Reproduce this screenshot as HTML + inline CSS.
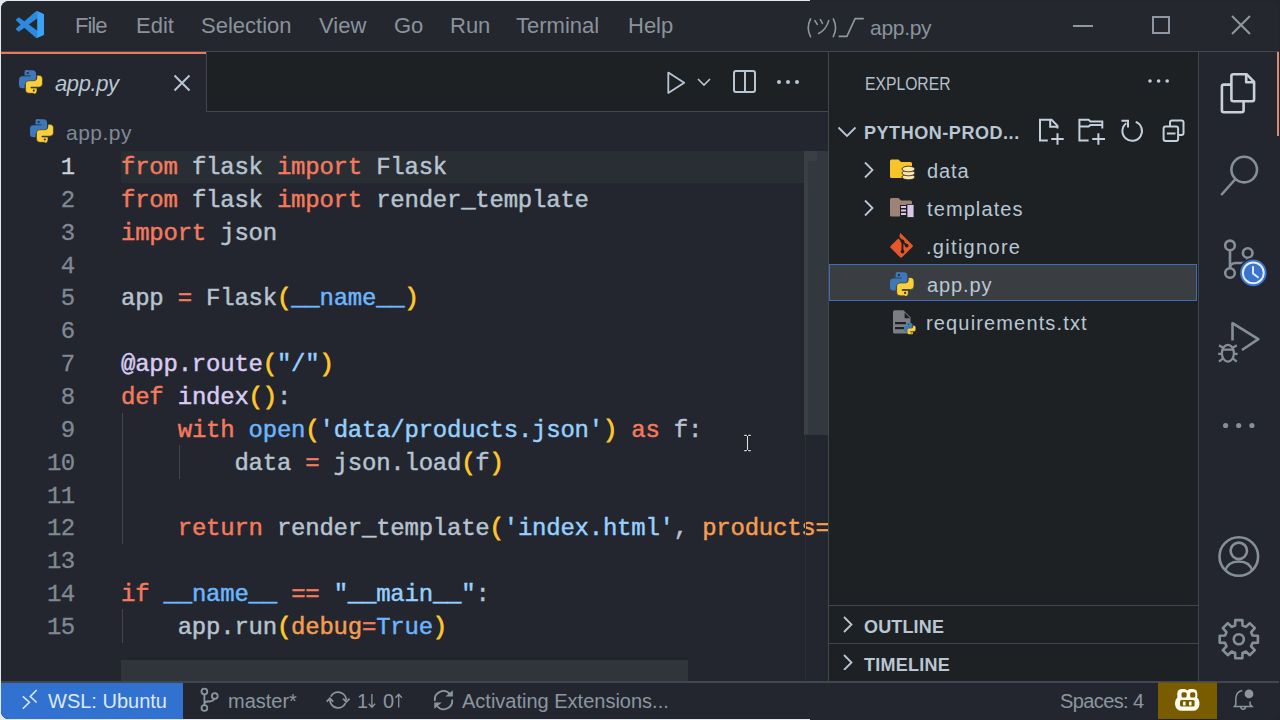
<!DOCTYPE html>
<html><head><meta charset="utf-8">
<style>
*{margin:0;padding:0;box-sizing:border-box}
html,body{width:1280px;height:720px;overflow:hidden;background:linear-gradient(90deg,#e3e8f0 0,#e3e8f0 810px,#22262c 810px,#22262c 100%)}
body{position:relative;font-family:"Liberation Sans",sans-serif}
.a{position:absolute}
#win{position:absolute;left:1px;top:1px;width:1278px;height:717.5px;background:#23262e;border-radius:8px;overflow:hidden}
.t{position:absolute;white-space:pre;line-height:1;transform-origin:0 0}
.menu{color:#8a939c;font-size:22px}
.code{-webkit-text-stroke:0.45px currentColor;font-family:"Liberation Mono",monospace;font-size:24px;letter-spacing:-0.23px;white-space:pre;position:absolute;left:120px;line-height:32.857px;color:#b6c3d0}
.ln{-webkit-text-stroke:0.3px currentColor;font-family:"Liberation Mono",monospace;font-size:24px;letter-spacing:-0.6px;position:absolute;width:73.6px;text-align:right;line-height:32.857px;color:#7f8993;left:0}
.k{color:#f47a5e}.s{color:#96d0ff}.b{color:#6cb6ff}.f{color:#d9cbf3}.o{color:#f69d50}.y{color:#ffc72e;-webkit-text-stroke:0.8px #ffc72e}
.side{color:#b9c6d3;font-size:20px;letter-spacing:0.9px}
.sb{color:#8b96a1;font-size:20px}
</style></head><body>
<div id="win">
  <!-- title bar -->
  <div class="a" style="left:0;top:0;width:1278px;height:50px;background:#24272e"></div>
  <div class="a" style="left:0;top:50px;width:1278px;height:1px;background:#42474f"></div>
  <!-- vscode logo -->
  <svg class="a" style="left:14.6px;top:10px" width="28.5" height="27" viewBox="0 0 100 100" preserveAspectRatio="none">
    <path d="M96.46 10.8L75.86.87a6.23 6.230 0 0 0-7.1 1.2L29.35 38.04 12.190 25.010a4.16 4.16 0 0 0-5.32.24l-5.5 5a4.17 4.17 0 0 0 0 6.16L16.25 50 1.37 63.58a4.17 4.17 0 0 0 0 6.16l5.5 5a4.16 4.16 0 0 0 5.32.24l17.16-13.03 39.41 35.97a6.22 6.22 0 0 0 7.1 1.2l20.6-9.92A6.25 6.25 0 0 0 100 83.58V16.42a6.26 6.26 0 0 0-3.54-5.62zM75.02 72.7L45.11 50l29.9-22.7v45.4z" fill="#2b8ae0"/>
    <path d="M75 0.5 L96.5 10.8 A6.26 6.26 0 0 1 100 16.42 V83.58 A6.25 6.25 0 0 1 96.46 89.2 L75 99.5 Z" fill="#3ba3f5"/>
  </svg>
  <div class="t menu" style="left:74px;top:14px;letter-spacing:-1px">File</div>
  <div class="t menu" style="left:135px;top:14px">Edit</div>
  <div class="t menu" style="left:200px;top:14px">Selection</div>
  <div class="t menu" style="left:318px;top:14px">View</div>
  <div class="t menu" style="left:393px;top:14px">Go</div>
  <div class="t menu" style="left:449px;top:14px">Run</div>
  <div class="t menu" style="left:515px;top:14px">Terminal</div>
  <div class="t menu" style="left:627px;top:14px">Help</div>
  <svg class="a" style="left:799px;top:11px" width="70" height="30" viewBox="800 12 70 30" fill="none" stroke="#8f98a2" stroke-width="1.6" stroke-linecap="round">
    <path d="M810.5 18.9 Q806 28 810.5 36.7"/>
    <path d="M814.9 20.6 L817.3 24.4 M820.4 19.5 L822.4 23.3 M828.7 20.6 Q826 30 818.6 33.4"/>
    <path d="M833.3 18.9 Q837.8 28 833.3 36.7"/>
    <path d="M838.6 36.4 H846.9 L855.1 18.6 H863.8" stroke-linecap="butt"/>
  </svg>
  <div class="t menu" style="left:869px;top:15.5px;font-size:21px;letter-spacing:-0.3px">app.py</div>
  <!-- window controls -->
  <div class="a" style="left:1072px;top:24px;width:20px;height:2px;background:#8f98a2"></div>
  <div class="a" style="left:1151px;top:15px;width:18px;height:18px;border:2px solid #8f98a2"></div>
  <svg class="a" style="left:1229px;top:13px" width="22" height="22" viewBox="0 0 22 22"><path d="M2 2 L20 20 M20 2 L2 20" stroke="#8f98a2" stroke-width="2"/></svg>

  <!-- tab bar -->
  <div class="a" style="left:0;top:51px;width:827px;height:60px;background:#1d2124"></div>
  <div class="a" style="left:0;top:110px;width:827px;height:1px;background:#42474f"></div>
  <div class="a" style="left:0;top:51px;width:206px;height:60px;background:#23262e;border-right:1px solid #42474f"></div>
  <div class="a" style="left:0;top:51px;width:205px;height:2px;background:#ec775c"></div>
  <div class="t" style="left:54px;top:72px;font-size:22px;font-style:italic;color:#b8c6d4;letter-spacing:-0.4px">app.py</div>
  <svg class="a" style="left:172px;top:73px" width="18" height="18" viewBox="0 0 18 18"><path d="M1.5 1.5 L16.5 16.5 M16.5 1.5 L1.5 16.5" stroke="#b8c6d4" stroke-width="2"/></svg>

  <!-- python symbol -->
  <svg width="0" height="0" style="position:absolute">
    <defs>
      <g id="py">
        <path d="M9.2 0.2 h4.6 a3.6 3.6 0 0 1 3.6 3.6 v5.8 a3.4 3.4 0 0 1 -3.4 3.4 h-5.2 a3 3 0 0 0 -3 3 v2.6 h-2.2 a3.6 3.6 0 0 1 -3.6 -3.6 v-4.9 a3.6 3.6 0 0 1 3.6 -3.6 h8.2 v-0.9 h-6.2 v-2.8 a3.6 3.6 0 0 1 3.6 -3.6 z" fill="#3d78bb"/>
        <circle cx="8.9" cy="3.1" r="1.1" fill="#1e2a3a"/>
        <path d="M14.8 23.8 h-4.6 a3.6 3.6 0 0 1 -3.6 -3.6 v-5.8 a3.4 3.4 0 0 1 3.4 -3.4 h5.2 a3 3 0 0 0 3 -3 v-2.6 h2.2 a3.6 3.6 0 0 1 3.6 3.6 v4.9 a3.6 3.6 0 0 1 -3.6 3.6 h-8.2 v0.9 h6.2 v2.8 a3.6 3.6 0 0 1 -3.6 3.6 z" fill="#f9cf3a" stroke="#23262e" stroke-width="0.6"/>
        <circle cx="15.1" cy="20.9" r="1.1" fill="#3a3420"/>
      </g>
    </defs>
  </svg>
  <svg class="a" style="left:18px;top:69px" width="23.5" height="23.5" viewBox="0 0 24 24"><use href="#py"/></svg>
  <svg class="a" style="left:29px;top:118px" width="23.5" height="23.5" viewBox="0 0 24 24"><use href="#py"/></svg>
  <!-- run, split, more -->
  <svg class="a" style="left:664px;top:68px" width="22" height="26" viewBox="0 0 22 26"><path d="M3.3 3.6 L19.2 13.7 L3.3 23.9 Z" fill="none" stroke="#b8c6d4" stroke-width="1.8" stroke-linejoin="round"/></svg>
  <svg class="a" style="left:695.5px;top:76px" width="14" height="10" viewBox="0 0 14 10"><path d="M1 2 L7 8 L13 2" fill="none" stroke="#b8c6d4" stroke-width="1.6"/></svg>
  <div class="a" style="left:732px;top:69px;width:22.6px;height:22.6px;border:2px solid #b8c6d4;border-radius:3px"></div>
  <div class="a" style="left:742.6px;top:69px;width:2px;height:22.6px;background:#b8c6d4"></div>
  <svg class="a" style="left:775px;top:78px" width="24" height="6" viewBox="0 0 24 6"><circle cx="3" cy="3" r="2" fill="#b8c6d4"/><circle cx="12" cy="3" r="2" fill="#b8c6d4"/><circle cx="21" cy="3" r="2" fill="#b8c6d4"/></svg>

  <!-- breadcrumb -->
  <div class="t" style="left:65px;top:121px;font-size:21px;letter-spacing:0.5px;color:#7f8a96">app.py</div>

  <!-- editor -->
  <div class="a" style="left:120px;top:150px;width:684px;height:32px;background:#292d34"></div>
  <div class="a" id="code" style="left:0;top:151px;width:805px;height:530px">
    <div class="ln" style="top:0;color:#c8d2dc">1</div>
    <div class="ln" style="top:32.857px">2</div>
    <div class="ln" style="top:65.714px">3</div>
    <div class="ln" style="top:98.571px">4</div>
    <div class="ln" style="top:131.43px">5</div>
    <div class="ln" style="top:164.29px">6</div>
    <div class="ln" style="top:197.14px">7</div>
    <div class="ln" style="top:230px">8</div>
    <div class="ln" style="top:262.86px">9</div>
    <div class="ln" style="top:295.71px">10</div>
    <div class="ln" style="top:328.57px">11</div>
    <div class="ln" style="top:361.43px">12</div>
    <div class="ln" style="top:394.29px">13</div>
    <div class="ln" style="top:427.14px">14</div>
    <div class="ln" style="top:460px">15</div>
    <div class="code" style="top:0"><span class="k">from</span> flask <span class="k">import</span> Flask</div>
    <div class="code" style="top:32.857px"><span class="k">from</span> flask <span class="k">import</span> render_template</div>
    <div class="code" style="top:65.714px"><span class="k">import</span> json</div>
    <div class="code" style="top:131.43px">app <span class="k">=</span> Flask<span class="y">(</span><span class="b">__name__</span><span class="y">)</span></div>
    <div class="code" style="top:197.14px"><span class="f">@app.route</span><span class="y">(</span><span class="s">"/"</span><span class="y">)</span></div>
    <div class="code" style="top:230px"><span class="k">def</span> <span class="f">index</span><span class="y">()</span>:</div>
    <div class="code" style="top:262.86px">    <span class="k">with</span> <span class="b">open</span><span class="y">(</span><span class="s">'data/products.json'</span><span class="y">)</span> <span class="k">as</span> f:</div>
    <div class="code" style="top:295.71px">        data <span class="k">=</span> json.load<span class="y">(</span>f<span class="y">)</span></div>
    <div class="code" style="top:361.43px">    <span class="k">return</span> render_template<span class="y">(</span><span class="s">'index.html'</span>, <span class="o">products=</span></div>
    <div class="code" style="top:427.14px"><span class="k">if</span> <span class="b">__name__</span> <span class="k">==</span> <span class="s">"__main__"</span>:</div>
    <div class="code" style="top:460px">    app.run<span class="y">(</span><span class="o">debug</span><span class="k">=</span><span class="b">True</span><span class="y">)</span></div>
  </div>
  <!-- indent guides -->
  <div class="a" style="left:121px;top:411.6px;width:1.3px;height:131px;background:#40454d"></div>
  <div class="a" style="left:177.5px;top:444px;width:1.3px;height:33.7px;background:#40454d"></div>
  <div class="a" style="left:121px;top:608.4px;width:1.3px;height:33.2px;background:#40454d"></div>
  <!-- scrollbars -->
  <div class="a" style="left:803px;top:149.5px;width:24px;height:284px;background:#33383e"></div>
  <div class="a" style="left:803px;top:149.5px;width:3.5px;height:284px;background:#3b3f45"></div>
  <div class="a" style="left:807px;top:149.5px;width:9px;height:10px;background:#3a3f46"></div>
  <div class="a" style="left:127px;top:656px;width:560px;height:3px;background:#202427"></div>
  <div class="a" style="left:120px;top:659px;width:567px;height:21.5px;background:#30353b"></div>
  <!-- sidebar -->
  <div class="a" style="left:827px;top:51px;width:1px;height:630px;background:#42474f"></div>
  <div class="a" style="left:828px;top:51px;width:369px;height:630px;background:#1d2124"></div>
  <div class="t side" style="left:863.5px;top:74px;font-size:18px;letter-spacing:0;transform:scaleX(0.872);color:#b4c0cc">EXPLORER</div>
  <svg class="a" style="left:1145.5px;top:77px" width="24" height="6" viewBox="0 0 24 6"><circle cx="3" cy="3" r="1.8" fill="#c0ccd8"/><circle cx="11.6" cy="3" r="1.8" fill="#c0ccd8"/><circle cx="20.2" cy="3" r="1.8" fill="#c0ccd8"/></svg>
  <svg class="a" style="left:836px;top:124px" width="20" height="14" viewBox="0 0 20 14"><path d="M1.5 2.5 L10 11 L18.5 2.5" fill="none" stroke="#b8c6d4" stroke-width="1.8"/></svg>
  <div class="t side" style="left:863px;top:123px;font-size:18px;font-weight:bold;letter-spacing:0.55px">PYTHON-PROD...</div>
  <!-- tree -->
  <div class="a" style="left:828px;top:263.3px;width:368px;height:37px;background:#3a3e43;border:1px solid #3d6fb8"></div>
  <div class="t side" style="left:926px;top:160px">data</div>
  <div class="t side" style="left:926px;top:198px;letter-spacing:1.1px">templates</div>
  <div class="t side" style="left:925px;top:236px;letter-spacing:1.3px">.gitignore</div>
  <div class="t side" style="left:926px;top:274px">app.py</div>
  <div class="t side" style="left:925px;top:312px;letter-spacing:1.15px">requirements.txt</div>

  <!-- sidebar toolbar icons -->
  <svg class="a" style="left:1029px;top:109px" width="160" height="40" viewBox="1030 110 160 40" fill="none" stroke="#c3cfdb" stroke-width="2">
    <path d="M1047.8 140.4 H1040 V119.8 H1051.6 L1057.5 125.8 V128.6"/>
    <path d="M1050.2 120 V126.8 H1057.5"/>
    <path d="M1051.2 139 H1063.7 M1057.5 133.2 V144.8"/>
    <path d="M1088.6 140.4 H1079.4 V119.8 H1088.6 L1090.4 121.4 H1102.3 V128.6"/>
    <path d="M1079.4 126.5 H1088.6 L1090.4 124.9 H1102.3"/>
    <path d="M1092.2 139 H1105 M1098.4 133.2 V144.8"/>
    <path d="M1135.7 121.9 A9.8 9.8 0 1 1 1126.3 123.2"/>
    <path d="M1121.4 120.8 H1128 V127.4"/>
    <path d="M1170 126.5 V122.5 a2 2 0 0 1 2 -2 h9.5 a2 2 0 0 1 2 2 v10.5 a2 2 0 0 1 -2 2 h-3.4"/>
    <rect x="1163.6" y="126.5" width="14.5" height="14.5" rx="2"/>
    <path d="M1166.9 133.6 H1175.5"/>
  </svg>
  <!-- tree chevrons -->
  <svg class="a" style="left:859px;top:159px" width="20" height="60" viewBox="860 160 20 60" fill="none" stroke="#b9c6d3" stroke-width="1.8">
    <path d="M865 162.5 L872.5 170 L865 177.5"/>
    <path d="M865 200.5 L872.5 208 L865 215.5"/>
  </svg>
  <svg class="a" style="left:837px;top:609px" width="20" height="60" viewBox="838 610 20 60" fill="none" stroke="#b9c6d3" stroke-width="1.8">
    <path d="M844 617 L851.5 624.5 L844 632"/>
    <path d="M844 655 L851.5 662.5 L844 670"/>
  </svg>
  <!-- tree file icons -->
  <svg class="a" style="left:887px;top:155px" width="30" height="30" viewBox="888 156 30 30">
    <path d="M890 161 a1.5 1.5 0 0 1 1.5 -1.5 h7 l2.5 2.5 h9.5 a1.5 1.5 0 0 1 1.5 1.5 v13 a1.5 1.5 0 0 1 -1.5 1.5 h-19 a1.5 1.5 0 0 1 -1.5 -1.5 z" fill="#f8c42a"/>
    <ellipse cx="908.5" cy="177" rx="6.5" ry="2.8" fill="#fbe6a6" stroke="#1d2124" stroke-width="0.8"/>
    <ellipse cx="908.5" cy="173" rx="6.5" ry="2.8" fill="#fbe6a6" stroke="#1d2124" stroke-width="0.8"/>
    <ellipse cx="908.5" cy="169" rx="6.5" ry="2.8" fill="#fbe6a6" stroke="#1d2124" stroke-width="0.8"/>
  </svg>
  <svg class="a" style="left:887px;top:193px" width="30" height="30" viewBox="888 194 30 30">
    <path d="M890 199.5 a1.5 1.5 0 0 1 1.5 -1.5 h7 l2.5 2.5 h9.5 a1.5 1.5 0 0 1 1.5 1.5 v13 a1.5 1.5 0 0 1 -1.5 1.5 h-19 a1.5 1.5 0 0 1 -1.5 -1.5 z" fill="#9d8275"/>
    <rect x="900" y="205" width="7" height="12" fill="#1d2124"/>
    <rect x="901" y="206" width="5" height="2" fill="#d9c6e6"/>
    <rect x="901" y="209.5" width="5" height="2" fill="#d9c6e6"/>
    <rect x="901" y="213" width="5" height="2" fill="#d9c6e6"/>
    <rect x="907" y="204.5" width="7" height="13" fill="#d9c6e6" stroke="#1d2124" stroke-width="0.8"/>
  </svg>
  <svg class="a" style="left:888px;top:232px" width="26" height="26" viewBox="0 0 28 28">
    <path d="M12 1.8 L25.2 15 Q26.2 16 25.2 17 L14 28.2 Q13 29.2 12 28.2 L1.8 18 Q0.8 17 1.8 16 L11 6.8 Z" fill="#e8572a" transform="translate(0,-2)"/>
    <path d="M10 4.5 L14.5 9 M14.5 9 V19.5 M14.5 9 L18.5 13" stroke="#1d2124" stroke-width="2" fill="none"/>
    <circle cx="14.5" cy="20" r="2" fill="#1d2124"/><circle cx="19" cy="13.5" r="2" fill="#1d2124"/><circle cx="14.5" cy="9" r="2" fill="#1d2124"/>
  </svg>
  <svg class="a" style="left:889px;top:271px" width="24" height="24" viewBox="0 0 24 24"><use href="#py"/></svg>
  <svg class="a" style="left:887px;top:307px" width="30" height="28" viewBox="888 308 30 28">
    <path d="M893 311.8 a1.5 1.5 0 0 1 1.5 -1.5 h9 l7 7 v14.8 a1.5 1.5 0 0 1 -1.5 1.5 h-14.5 a1.5 1.5 0 0 1 -1.5 -1.5 z" fill="#7b7e84"/>
    <path d="M904.6 312.6 V318.2 H910.2 Z" fill="#1d2124"/>
    <rect x="895" y="322" width="11" height="2.2" fill="#1d2124"/>
    <rect x="895" y="327" width="9" height="2.2" fill="#1d2124"/>
    <svg x="904" y="322.8" width="11.8" height="11.8" viewBox="0 0 24 24"><use href="#py"/></svg>
  </svg>
  <!-- sections -->
  <div class="a" style="left:828px;top:604px;width:369px;height:1px;background:#42474f"></div>
  <div class="a" style="left:828px;top:642px;width:369px;height:1px;background:#42474f"></div>
  <div class="t side" style="left:863px;top:617px;font-size:18px;font-weight:bold;letter-spacing:0.15px">OUTLINE</div>
  <div class="t side" style="left:863px;top:655px;font-size:18px;font-weight:bold;letter-spacing:0.25px">TIMELINE</div>
  <!-- activity bar -->
  <div class="a" style="left:1197px;top:51px;width:1px;height:630px;background:#42474f"></div>

  <!-- activity bar icons -->
  <svg class="a" style="left:1197px;top:50px" width="79" height="630" viewBox="1198 51 79 630" fill="none" stroke-linejoin="round">
    <g stroke="#c7d1dc" stroke-width="2.6">
      <path d="M1231.4 84.6 H1223.9 a2 2 0 0 0 -2 2 V110.2 a2 2 0 0 0 2 2 H1241.6 a2 2 0 0 0 2 -2 V101.2"/>
      <path d="M1233.4 74.2 H1246.5 L1254.1 81.8 V99.2 a2 2 0 0 1 -2 2 H1233.4 a2 2 0 0 1 -2 -2 V76.2 a2 2 0 0 1 2 -2 z"/>
      <path d="M1246.2 74.6 V82.2 H1253.8"/>
    </g>
    <g stroke="#858f99" stroke-width="2.6">
      <circle cx="1244.2" cy="169.6" r="12.8"/>
      <path d="M1235.5 179 L1221.2 195"/>
      <circle cx="1230" cy="245.4" r="4.8"/>
      <circle cx="1247.7" cy="253" r="4.8"/>
      <circle cx="1230" cy="273" r="4.8"/>
      <path d="M1230 250.2 V268.2"/>
      <path d="M1247.7 257.8 Q1247.7 263 1242 263 H1236 Q1230 263 1230 268"/>
      <path d="M1232.5 340.6 V323.2 L1258.3 339.2 L1242 350"/>
    </g>
    <circle cx="1253.3" cy="272.9" r="14.8" fill="#23262e"/>
    <circle cx="1253.3" cy="272.9" r="13.3" fill="#3a74cf"/>
    <circle cx="1253.3" cy="272.9" r="10.4" fill="none" stroke="#e6eefa" stroke-width="1.9"/>
    <path d="M1253 266.3 V273.6 L1258.6 277.8" stroke="#e6eefa" stroke-width="1.9" fill="none"/>
    <g stroke="#858f99" stroke-width="2.2">
      <ellipse cx="1227.9" cy="353.2" rx="6" ry="8.4"/>
      <path d="M1222 349.6 H1233.8 M1219 345.3 L1223 347.8 M1218.2 353.8 H1222 M1219 361.6 L1223 358.4 M1236.8 345.3 L1232.8 347.8 M1237.6 353.8 H1233.8 M1236.8 361.6 L1232.8 358.4"/>
    </g>
    <g fill="#858f99">
      <circle cx="1225.6" cy="425.5" r="2.6"/><circle cx="1238.7" cy="425.5" r="2.6"/><circle cx="1251.9" cy="425.5" r="2.6"/>
    </g>
    <g stroke="#858f99" stroke-width="2.6">
      <circle cx="1238.8" cy="556.5" r="19.3"/>
      <circle cx="1238.8" cy="550.8" r="8.2"/>
      <path d="M1225.3 571 Q1227.5 561.5 1238.8 561.5 Q1250 561.5 1252.3 571"/>
    </g>
    <g stroke="#858f99" stroke-width="2.6">
      <path d="M1235.1 625.5 L1235.3 620.1 L1242.3 620.1 L1242.5 625.5 L1245.9 626.9 L1249.8 623.2 L1254.8 628.2 L1251.1 632.1 L1252.5 635.5 L1257.9 635.7 L1257.9 642.7 L1252.5 642.9 L1251.1 646.3 L1254.8 650.2 L1249.8 655.2 L1245.9 651.5 L1242.5 652.9 L1242.3 658.3 L1235.3 658.3 L1235.1 652.9 L1231.7 651.5 L1227.8 655.2 L1222.8 650.2 L1226.5 646.3 L1225.1 642.9 L1219.7 642.7 L1219.7 635.7 L1225.1 635.5 L1226.5 632.1 L1222.8 628.2 L1227.8 623.2 L1231.7 626.9 Z"/>
      <circle cx="1238.8" cy="639.2" r="5"/>
    </g>
  </svg>

  <!-- active indicator -->
  <div class="a" style="left:1275.5px;top:51px;width:2.8px;height:84px;background:#dc8a70"></div>
  <!-- overview ruler line -->
  <div class="a" style="left:804px;top:433px;width:1px;height:247px;background:#2b3037"></div>
  <!-- I-beam cursor -->
  <svg class="a" style="left:737px;top:429px" width="18" height="26" viewBox="738 430 18 26">
    <path d="M743.9 435.4 H751 M743.9 450.6 H751 M747.5 435.5 V450.5" stroke="#15171b" stroke-width="3"/>
    <path d="M744.2 435.4 H746.8 M748.2 435.4 H750.8 M744.2 450.6 H746.8 M748.2 450.6 H750.8 M747.5 436 V450" stroke="#e4dcec" stroke-width="1.2"/>
  </svg>
  <!-- status bar -->
  <div class="a" style="left:0;top:680px;width:1278px;height:2px;background:#42474f"></div>
  <div class="a" style="left:0;top:682px;width:1278px;height:36px;background:#23262e"></div>
  <div class="a" style="left:0;top:682px;width:182px;height:36px;background:#3172d0"></div>
  <div class="t sb" style="left:47px;top:690px;color:#dde8f6">WSL: Ubuntu</div>
  <div class="t sb" style="left:227px;top:690px">master*</div>
  <div class="t sb" style="left:356px;top:690px">1</div><div class="t sb" style="left:382px;top:690px">0</div>
  <div class="t sb" style="left:461px;top:690px">Activating Extensions...</div>
  <div class="t sb" style="left:1059px;top:690px;letter-spacing:-0.6px">Spaces: 4</div>
  <div class="a" style="left:1157px;top:682px;width:59px;height:36px;background:#7a5c00"></div>

  <!-- status bar icons -->
  <svg class="a" style="left:-1px;top:681px" width="1278" height="37" viewBox="0 682 1277 37" fill="none">
    <path d="M22.3 696.3 L28.9 702.2 L22.3 708.8 M36.2 690 L29.8 696.5 L36.2 702.5" stroke="#dde8f6" stroke-width="1.6"/>
    <g stroke="#8b96a1" stroke-width="1.8">
      <circle cx="203.9" cy="691.6" r="2.9"/>
      <circle cx="214.3" cy="696" r="2.9"/>
      <circle cx="203.9" cy="708" r="2.9"/>
      <path d="M203.9 694.5 V705.1 M214 698.9 Q212.5 701.5 209 701.5 H207 Q203.9 701.5 203.9 704"/>
      <path d="M330.3 696.6 A8.2 8.2 0 0 1 345.8 700.3 M345 703.2 A8.2 8.2 0 0 1 329.4 699.8"/>
      <path d="M342.6 698.6 L345.8 702 L349 698.6 M326.2 701.6 L329.4 698.2 L332.6 701.6"/>
      <path d="M434.4 701 A8.6 8.6 0 0 1 449.5 694.2 M451.7 699.5 A8.6 8.6 0 0 1 436.5 706"/>
      <path d="M451.7 691.5 V696 H446.5 Z M434.4 707.5 V703.2 H439.6 Z" fill="#8b96a1" stroke-width="1.2"/>
      <path d="M371.4 694 V707 M368.2 703.8 L371.4 707.2 L374.6 703.8 M398.2 707.5 V694.5 M395 697.7 L398.2 694.3 L401.4 697.7" stroke-width="1.3"/>
    </g>
    <rect x="1157.5" y="682.5" width="59" height="36" fill="#7a5c00"/>
    <g fill="#fffdf2">
      <rect x="1176.8" y="688.9" width="11" height="12" rx="4.5"/>
      <rect x="1185.8" y="688.9" width="11" height="12" rx="4.5"/>
      <rect x="1174.6" y="696" width="24.3" height="14.8" rx="6.5"/>
    </g>
    <g fill="#7a5c00">
      <rect x="1181" y="692.2" width="5.2" height="5.4" rx="1.6"/>
      <rect x="1189.6" y="692.2" width="5.2" height="5.4" rx="1.6"/>
      <rect x="1179.5" y="700" width="14.6" height="6.6" rx="1.5"/>
    </g>
    <rect x="1182.6" y="701.6" width="2.4" height="3.9" fill="#fffdf2"/><rect x="1188.6" y="701.6" width="2.4" height="3.9" fill="#fffdf2"/>
    <g stroke="#8b96a1" stroke-width="1.5" fill="none">
      <path d="M1241.8 690.4 Q1235.3 691.6 1235.3 699 V704.6 L1233.9 706.6 H1251.6 L1249.6 704.6 V701.4"/>
      <path d="M1240.2 706.8 a2.4 2.4 0 0 0 4.8 0"/>
    </g>
    <circle cx="1248.5" cy="693.9" r="4.4" fill="#8b96a1"/>
  </svg>
</div>
</body></html>
